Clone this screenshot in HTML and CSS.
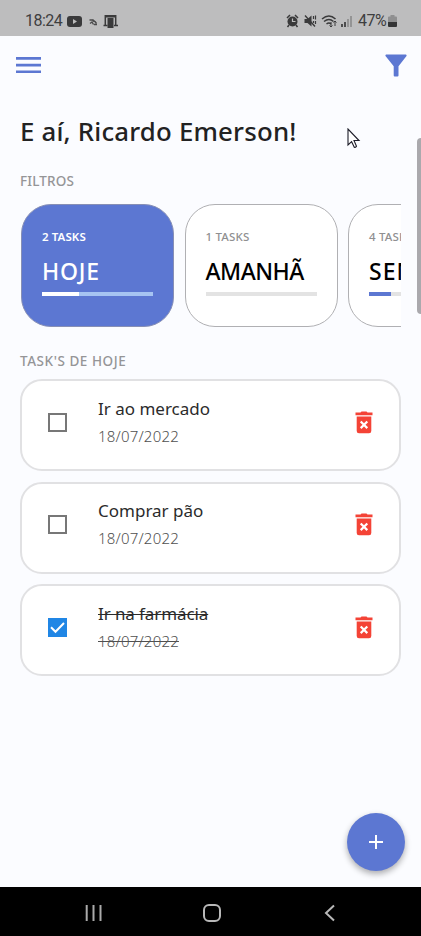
FILE: index.html
```
<!DOCTYPE html>
<html lang="pt-BR">
<head>
<meta charset="utf-8">
<title>Tasks</title>
<link rel="stylesheet" href="styles.css">
</head>
<body>
<div class="phone">
  <header class="status">
    <span class="clock">18:24</span>
    <svg class="notices" width="52" height="16" viewBox="0 0 52 16">
      <rect x="0" y="3" width="15" height="11" rx="3" fill="#3a3a3b"/><path d="M6 6l4 2.500-4 2.500z" fill="#bdbdbd"/>
      <path d="M22.500 7h3l1.500 1.500M23 10.500l2-1.500 1.500 2.500M25.500 6.500l3.500 3M27 11.500h3M28 8.500l1.500 2" stroke="#4a4a4b" stroke-width="1.400" fill="none"/>
      <path d="M38.300 12.500V2.700h10.400v9.800M36.500 12.500h4M47 12.500h4" stroke="#3a3a3b" stroke-width="1.500" fill="none"/><path d="M38 2h11v2.500h-11zM40.500 5h6V15h-6z" fill="#3a3a3b"/>
    </svg>
    <svg class="signals" width="68" height="16" viewBox="0 0 68 16">
      <circle cx="6.500" cy="8.500" r="5" fill="#3a3a3b"/><path d="M1 5l3-3M9 2l3 3M3 12l-1.500 2M10 12l1.500 2" stroke="#3a3a3b" stroke-width="1.500"/><path d="M6.500 5.500v3h3" stroke="#bdbdbd" stroke-width="1.200" fill="none"/>
      <path d="M18.500 6h3l4-3.500v11l-4-3.500h-3z" fill="#3a3a3b"/><path d="M19 2.500l10 11" stroke="#3a3a3b" stroke-width="1.400"/><path d="M27.500 3v3M27.500 8v2M29.500 2.500v4M29.500 8v3" stroke="#3a3a3b" stroke-width="1.200"/>
      <path d="M36 6q7-6 13.500 0M38 8.500q5-4 9.500 0M40.500 11q2.500-2 4.500 0" stroke="#3a3a3b" stroke-width="1.500" fill="none"/><path d="M45 9v5M43.500 12.500l1.500 1.500 1.500-1.500M49 13V8M47.500 9.500L49 8l1.500 1.500" stroke="#3a3a3b" fill="none"/>
      <path d="M56 14v-3M59 14V9" stroke="#3a3a3b" stroke-width="1.700"/><path d="M62 14V6M65 14V3" stroke="#8d8d8e" stroke-width="1.700"/>
    </svg>
    <span class="charge">47%</span>
    <svg class="battery" width="9" height="14" viewBox="0 0 9 14"><path d="M2.500 1h4v1.500H8q1 0 1 1V8H0V3.500q0-1 1-1h1.500z" fill="#8f8f90"/><path d="M0 8h9v4q0 1-1 1H1q-1 0-1-1z" fill="#343435"/></svg>
  </header>

  <nav class="appbar">
    <svg width="25" height="18" viewBox="0 0 25 18" fill="#5c77d2"><path d="M0 1h25v2.700H0zM0 7.800h25v2.700H0zM0 14.400h25v2.600H0z"/></svg>
    <svg width="22" height="23" viewBox="0 0 22 23" fill="#5c77d2"><path d="M1 .5h20q1 .5.500 1.500L13.500 12.300V21.500q0 1-1 1H9.700q-1 0-1-1v-9.200L.5 2Q0 1 1 .5z"/></svg>
  </nav>

  <main class="content">
    <h1 class="greeting">E aí, Ricardo Emerson!</h1>
    <h2 class="section filters-label">FILTROS</h2>
    <div class="filters">
      <article class="filter active"><p class="count">2 TASKS</p><p class="name name-today">HOJE</p><div class="bar"><div class="fill third"></div></div></article>
      <article class="filter"><p class="count">1 TASKS</p><p class="name">AMANHÃ</p><div class="bar"></div></article>
      <article class="filter"><p class="count">4 TASKS</p><p class="name name-week">SEMANA</p><div class="bar"><div class="fill fifth"></div></div></article>
    </div>
    <h2 class="section tasks-label">TASK'S DE HOJE</h2>
    <div class="tasks">
      <article class="task">
        <span class="check"></span>
        <div class="text"><p class="title">Ir ao mercado</p><p class="date">18/07/2022</p></div>
        <svg class="trash" width="18" height="23" viewBox="0 0 18 23"><path d="M.5 1.500h5L6.500.5h5l1 1h5v2.700H.5zM1.700 5.500h14.600V20q0 2.300-2.300 2.300H4Q1.700 22.300 1.700 20z" fill="#f44336"/><path d="M5.700 10.500l6.600 6.600M12.300 10.500l-6.600 6.600" stroke="#fff" stroke-width="2.200"/></svg>
      </article>
      <article class="task">
        <span class="check"></span>
        <div class="text"><p class="title">Comprar pão</p><p class="date">18/07/2022</p></div>
        <svg class="trash" width="18" height="23" viewBox="0 0 18 23"><path d="M.5 1.500h5L6.500.5h5l1 1h5v2.700H.5zM1.700 5.500h14.600V20q0 2.300-2.300 2.300H4Q1.700 22.300 1.700 20z" fill="#f44336"/><path d="M5.700 10.500l6.600 6.600M12.300 10.500l-6.600 6.600" stroke="#fff" stroke-width="2.200"/></svg>
      </article>
      <article class="task done">
        <span class="check"><svg width="19" height="19" viewBox="0 0 19 19"><path d="M3 9.300l4.500 4.500L16 5" stroke="#fff" stroke-width="2" fill="none"/></svg></span>
        <div class="text"><p class="title">Ir na farmácia</p><p class="date">18/07/2022</p></div>
        <svg class="trash" width="18" height="23" viewBox="0 0 18 23"><path d="M.5 1.500h5L6.500.5h5l1 1h5v2.700H.5zM1.700 5.500h14.600V20q0 2.300-2.300 2.300H4Q1.700 22.300 1.700 20z" fill="#f44336"/><path d="M5.700 10.500l6.600 6.600M12.300 10.500l-6.600 6.600" stroke="#fff" stroke-width="2.200"/></svg>
      </article>
    </div>
  </main>

  <div class="fab"><svg width="14" height="14" viewBox="0 0 14 14"><path d="M7 0v14M0 7h14" stroke="#fff" stroke-width="2"/></svg></div>
  <div class="scrollbar"></div>
  <svg class="pointer" width="14" height="21" viewBox="0 0 14 21"><path d="M1 1v16l3.600-3.300 2.700 5.500q1.500.5 2.200-1L7 12.500h5z" fill="#fff" stroke="#1c1c28" stroke-width="1.100"/></svg>

  <footer class="navbar">
    <svg width="18" height="18" viewBox="0 0 18 18"><path d="M1.700 1v16M8.500 1v16M15.500 1v16" stroke="#aaa" stroke-width="2"/></svg>
    <svg class="home" width="20" height="20" viewBox="0 0 20 20"><rect x="2" y="2" width="16" height="16" rx="5" fill="none" stroke="#b8b8b8" stroke-width="2"/></svg>
    <svg width="12" height="18" viewBox="0 0 12 18"><path d="M10 1.500L2 9l8 7.500" fill="none" stroke="#b8b8b8" stroke-width="2"/></svg>
  </footer>
</div>
</body>
</html>
```
FILE: styles.css
```
* { box-sizing: border-box; margin: 0; padding: 0; }
body { font-family: "Noto Sans", "Open Sans", sans-serif; background: #fbfcff; }
svg { display: block; flex: none; }
.phone { position: relative; width: 421px; height: 936px; display: flex; flex-direction: column; overflow: hidden; background: #fbfcff; }
.status { height: 36px; flex: none; background: #bdbdbe; display: flex; align-items: center; padding: 5px 24px 0 25px; font: 400 16px/20px Roboto, sans-serif; color: #3e3e3f; }
.clock { width: 42px; white-space: nowrap; letter-spacing: -0.5px; }
.signals { margin-left: auto; }
.charge { width: 30px; margin: 0 0 0 4px; letter-spacing: -0.5px; white-space: nowrap; }
.appbar { height: 58px; flex: none; display: flex; align-items: center; justify-content: space-between; padding: 0 14px 0 16px; }
.content { flex: 1; min-height: 0; padding: 19px 20px 0; }
.greeting { font: 500 25.800px/36px "Noto Sans", sans-serif; letter-spacing: .2px; color: #222; height: 36px; margin-bottom: 23px; white-space: nowrap; }
.section { font: 500 13.500px/18px "Noto Sans", sans-serif; color: #959597; height: 18px; white-space: nowrap; }
.filters-label { letter-spacing: .15px; }
.filters { display: flex; gap: 10.500px; margin-top: 14px; overflow: hidden; padding-left: 1px; }
.filter { width: 153px; height: 123px; flex: none; background: #fff; border: 1px solid #b0b0b3; border-radius: 30px; padding: 24px 20px; }
.count { font-weight: 500; font-size: 11.500px; line-height: 16px; letter-spacing: .2px; color: #8f8f91; white-space: nowrap; }
.name { font-weight: 500; font-size: 23px; line-height: 32px; margin-top: 10px; letter-spacing: -.5px; color: #000; white-space: nowrap; }
.name-today { letter-spacing: .8px; }
.name-week { letter-spacing: 1px; }
.bar { height: 4px; margin-top: 5px; background: #e3e3e3; }
.fill { height: 100%; background: #5c77d2; }
.third { width: 33.300%; }
.fifth { width: 20%; }
.active { background: #5c77d2; border-color: #878fb5; }
.active .count, .active .name { color: #fff; }
.active .count { font-weight: 600; letter-spacing: .1px; }
.active .bar { background: #a6c4f2; }
.active .fill { background: #fff; }
.tasks-label { margin-top: 25px; letter-spacing: .55px; }
.tasks { display: flex; flex-direction: column; gap: 10.500px; margin-top: 9px; }
.task { height: 92px; background: #fff; border: 2px solid #e1e1e3; border-radius: 22px; display: flex; padding: 0 26px; }
.check { width: 19px; height: 19px; margin-top: 31.500px; border: 2px solid #777; flex: none; }
.done .check { background: #2086e5; border: 0; }
.text { margin-left: 31px; flex: 1; }
.title { font-weight: 400; font-size: 17px; line-height: 26px; margin-top: 14.500px; color: #2b2b2b; }
.date { font-weight: 300; font-size: 15px; line-height: 22px; margin-top: 3px; letter-spacing: .2px; color: #505050; }
.done .title { letter-spacing: -.1px; }
.done .title, .done .date { text-decoration: line-through; text-decoration-thickness: 1px; width: max-content; }
.trash { margin-top: 29.500px; }
.fab { position: absolute; left: 347px; top: 813px; width: 58px; height: 58px; border-radius: 50%; background: #5c77d2; display: flex; align-items: center; justify-content: center; box-shadow: 0 3px 6px rgba(0,0,0,.32); }
.scrollbar { position: absolute; right: 0; top: 138px; width: 4px; height: 176px; background: #aaa9ad; border-radius: 4px 0 0 4px; }
.pointer { position: absolute; left: 347px; top: 128px; }
.navbar { height: 49px; flex: none; background: #000; display: flex; align-items: center; justify-content: space-between; padding: 2px 85px 0; }
.home { margin-right: 3px; }
```
